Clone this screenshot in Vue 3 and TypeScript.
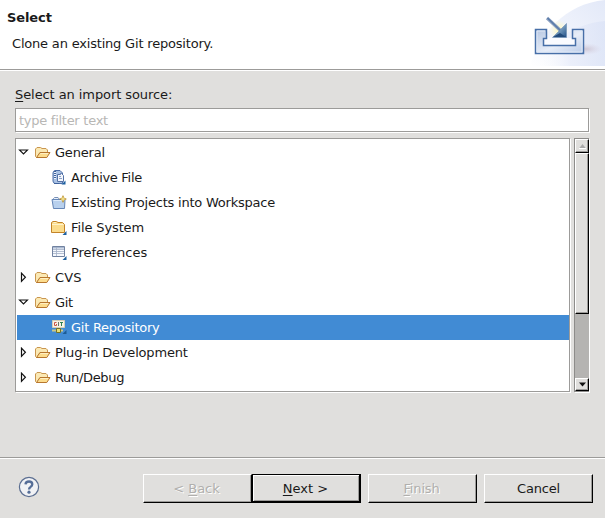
<script setup lang="ts">
import { ref } from 'vue'

type Icon = 'folder' | 'archive' | 'project' | 'files' | 'prefs' | 'git'
interface Row {
  label: string
  icon: Icon
  open?: boolean
  child?: boolean
  spacing: number
}

const rows: Row[] = [
  { label: 'General', icon: 'folder', open: true, spacing: -0.2 },
  { label: 'Archive File', icon: 'archive', child: true, spacing: -0.3 },
  { label: 'Existing Projects into Workspace', icon: 'project', child: true, spacing: -0.22 },
  { label: 'File System', icon: 'files', child: true, spacing: -0.12 },
  { label: 'Preferences', icon: 'prefs', child: true, spacing: -0.03 },
  { label: 'CVS', icon: 'folder', open: false, spacing: 0.2 },
  { label: 'Git', icon: 'folder', open: true, spacing: -0.3 },
  { label: 'Git Repository', icon: 'git', child: true, spacing: -0.25 },
  { label: 'Plug-in Development', icon: 'folder', open: false, spacing: -0.18 },
  { label: 'Run/Debug', icon: 'folder', open: false, spacing: -0.33 },
]
const selected = ref('Git Repository')
const filter = ref('')
</script>

<template>
  <div class="dialog">
    <header class="banner">
      <div class="heading">
        <h1>Select</h1>
        <p>Clone an existing Git repository.</p>
      </div>
      <svg class="art" width="105" height="66" viewBox="0 0 105 66">
        <defs>
          <linearGradient id="sky" x1="0" y1="1" x2="1" y2="0">
            <stop offset="0" stop-color="#fff" /><stop offset=".45" stop-color="#f1f4fc" /><stop offset="1" stop-color="#e3e9f8" />
          </linearGradient>
          <linearGradient id="sky2" x1="0" y1="0" x2="1" y2="0">
            <stop offset="0" stop-color="#fff" stop-opacity="0" /><stop offset=".5" stop-color="#e6ebf9" /><stop offset="1" stop-color="#dae2f6" />
          </linearGradient>
          <linearGradient id="tray" x1="0" y1="0" x2="1" y2="1">
            <stop offset="0" stop-color="#b5c6e2" /><stop offset=".55" stop-color="#e7edf8" /><stop offset="1" stop-color="#bacbe8" />
          </linearGradient>
          <radialGradient id="glow"><stop offset="0" stop-color="#fff9b8" /><stop offset="1" stop-color="#fffbd0" stop-opacity="0" /></radialGradient>
          <radialGradient id="shade"><stop offset="0" stop-color="#c4b8c6" stop-opacity=".7" /><stop offset="1" stop-color="#d8d0e0" stop-opacity="0" /></radialGradient>
          <linearGradient id="head" x1="0" y1="0" x2="1" y2="1">
            <stop offset="0" stop-color="#c2d5e8" /><stop offset=".6" stop-color="#638bb2" /><stop offset="1" stop-color="#204e86" />
          </linearGradient>
        </defs>
        <path d="M30 66C40 34 64 4 105 0V66Z" fill="url(#sky)" />
        <path d="M36 66C50 42 72 24 105 21V66Z" fill="url(#sky2)" opacity=".7" />
        <ellipse cx="86" cy="49" rx="16" ry="6" fill="url(#shade)" />
        <circle cx="59" cy="30" r="10" fill="url(#glow)" />
        <path d="M44.500 38h31v8h-31z" fill="#fafbff" />
        <path d="M35.500 29.500H46.500V38.500H43.500V45.500H75.500V38.500H72.500V29.500H83.500V53.500H35.500Z" fill="url(#tray)" stroke="#476fa8" stroke-width="1.500" />
        <path d="M37 31H45M37 31V52H82V31H74" fill="none" stroke="#dfe8f6" stroke-width="1" />
        <path d="M47 18L61 31" stroke="#8fa3c2" stroke-width="3.200" />
        <path d="M47.500 18L61 31" stroke="#597ba9" stroke-width="1.600" />
        <path d="M66.500 23.500V37.500H52.500Z" fill="url(#head)" stroke="#6b8db3" stroke-width=".6" />
        <path d="M53 37L60 33L66 37Z" fill="#234b7b" />
      </svg>
    </header>
    <div class="rule"></div>

    <main>
      <label class="caption" for="filter"><u>S</u>elect an import source:</label>
      <input id="filter" v-model="filter" class="filter" placeholder="type filter text" />
      <div class="viewer">
        <ul class="tree">
          <li
            v-for="row in rows"
            :key="row.label"
            :class="{ child: row.child, selected: selected === row.label }"
            @click="selected = row.label"
          >
            <svg v-if="!row.child" class="twisty" width="11" height="11" viewBox="0 0 11 11">
              <path v-if="row.open" d="M1.500 3H9.500L5.500 7Z" fill="#fff" stroke="#111" stroke-width="1.100" />
              <path v-else d="M3.500 1.200V9.300L7.400 5.250Z" fill="#fff" stroke="#111" stroke-width="1.200" />
            </svg>
            <svg class="icon" width="16" height="16" viewBox="0 0 16 16">
              <template v-if="row.icon === 'folder'">
                <path d="M1.500 12.500L.5 11.500V4L2 2.500H5.500L7 3.500H11L12.500 5V7.500H5L2 12.500Z" fill="#fbe9b4" stroke="#c9964f" />
                <path d="M1.500 12.500L5 7.500H15L11.800 12.500Z" fill="#fcdc8d" stroke="#b8772f" />
                <path d="M5.500 8.500H13" stroke="#fff0c4" />
              </template>
              <template v-else-if="row.icon === 'archive'">
                <path d="M4 .5H9L11.500 3V13.500H4Q2 13 2 11V3Q2 1 4 .5Z" fill="#a9c1e3" stroke="#4c6fa8" />
                <path d="M6.500 4.500H9.500V3.500H10.500L12.500 5.500V11.500H6.500Z" fill="#f4f7fd" stroke="#5673a6" />
                <path d="M4 1V9" stroke="#f1f5fc" stroke-width="2" />
                <path d="M4 1V9" stroke="#3f629c" stroke-width="2" stroke-dasharray="1 1" />
                <path d="M8 6.500H10M8 8.500H11" stroke="#8ea2c5" />
                <path d="M3 13.500H8" stroke="#3f629c" />
                <path d="M14.500 10.500V14.500H10.500Z" fill="#1c5f9f" />
              </template>
              <template v-else-if="row.icon === 'project'">
                <path d="M2.500 5V3.500L3.500 2.500H7L8.500 4.500" fill="#e7effa" stroke="#7990b6" />
                <path d="M1 4.500H14L13.500 13.500H2.500Z" fill="#b8d0ed" stroke="#6586b7" />
                <path d="M2.500 5.500H12" stroke="#dceafb" />
                <path d="M12 0L13.300 2.700L16 4L13.300 5.300L12 8L10.700 5.300L8 4L10.700 2.700Z" fill="#b98c22" />
                <path d="M12 2V6M10 4H14" stroke="#fff5ac" />
              </template>
              <template v-else-if="row.icon === 'files'">
                <path d="M.5 12.500V2.500L2 1.500H5.500L7 2.500H11.500L13.500 4.500V12.500Z" fill="#fbdc8d" stroke="#c38328" />
                <path d="M1 4.500H12.500M2.500 2.500H5" stroke="#fff3cc" />
                <path d="M15.500 11V15H11.500Z" fill="#1c5f9f" />
              </template>
              <template v-else-if="row.icon === 'prefs'">
                <path d="M1.500 1.500H13.500V11.500H1.500Z" fill="#f5f8fd" stroke="#7182a0" />
                <path d="M2 2H13V3.500H2Z" fill="#a9b8d0" />
                <path d="M2 4.500H13M5.500 2V11M2 6.500H13M2 8.500H13" stroke="#a3b0c6" stroke-width=".8" />
                <path d="M15.500 11V15H11.500Z" fill="#1c5f9f" />
              </template>
              <template v-else>
                <path d="M1.500 .5H13.500V7.500H1.500Z" fill="#f8f4e7" stroke="#d5d0b8" />
                <path d="M5.500 2.500H3.500V5.500H5.500V4" fill="none" stroke="#c85647" />
                <path d="M7.500 2V6" stroke="#6c7866" />
                <path d="M9 2.500H12M10.500 2.500V6" stroke="#328153" />
                <path d="M7.500 8V10" stroke="#6c7030" stroke-width="2" />
                <path d="M1 10.500H12" stroke="#cbc88a" stroke-width="2" />
                <path d="M5.500 8.500H9.500V12.500H5.500Z" fill="#e8df77" stroke="#757223" />
                <path d="M15.500 10V14H11.500Z" fill="#1d5c94" />
              </template>
            </svg>
            <span class="label" :style="{ letterSpacing: row.spacing + 'px' }">{{ row.label }}</span>
          </li>
        </ul>
        <div class="scrollbar">
          <div class="cap"><svg width="7" height="5"><path d="M0 4.500L3.500 0L7 4.500Z" fill="#aaa" /><path d="M0 4.500H7" stroke="#fff" /></svg></div>
          <div class="thumb"></div>
          <div class="cap down"><svg width="7" height="5"><path d="M0 .5H7L3.500 4.500Z" fill="#111" /></svg></div>
        </div>
      </div>
    </main>

    <div class="rule"></div>
    <footer>
      <svg class="help" width="22" height="22" viewBox="0 0 22 22">
        <circle cx="11" cy="11" r="9.600" fill="#f1f2f5" stroke="#5b6e91" stroke-width="1.200" />
        <path d="M7.500 8.400Q7.600 5.500 11 5.500Q14.300 5.500 14.300 8.300Q14.300 9.800 12.600 10.900Q11 11.800 11 13.500" fill="none" stroke="#566e98" stroke-width="2.300" />
        <circle cx="11" cy="16.200" r="1.600" fill="#566e98" />
      </svg>
      <div class="buttons">
        <button disabled>&lt; <u>B</u>ack</button>
        <button class="default"><u>N</u>ext &gt;</button>
        <button class="finish" disabled><u>F</u>inish</button>
        <button class="cancel">Cancel</button>
      </div>
    </footer>
  </div>
</template>

<style>
body { margin: 0; overflow: hidden; }
</style>

<style scoped>
.dialog {
  width: 605px; height: 518px; display: flex; flex-direction: column;
  background: #e0dfdd; color: #1a1a1a;
  font: 13px/16px "DejaVu Sans", sans-serif;
}
.banner { height: 69px; display: flex; justify-content: space-between; background: #fff; }
.heading { padding: 10px 0 0 7px; }
h1 { margin: 0; font-size: 13px; line-height: 16px; font-weight: bold; letter-spacing: -.1px; }
p { margin: 10px 0 0 5px; letter-spacing: -.19px; }
.art { display: block; }
.rule { height: 1px; flex: none; background: #9c9b99; border-bottom: 1px solid #fff; }
main { height: 370px; padding: 16px 15px 0; display: flex; flex-direction: column; }
u { text-underline-offset: 2px; text-decoration-thickness: 1px; }
.caption { height: 21px; letter-spacing: -.08px; }
.filter {
  box-sizing: border-box; width: 574px; height: 24px; padding: 0 3px; margin: 0 0 6px;
  border: 1px solid #9c9b99; border-radius: 0; box-shadow: 1px 1px #fff; outline: none;
  font: inherit; letter-spacing: -.27px; background: #fff;
}
.filter::placeholder { color: #b8b7b5; opacity: 1; }
.viewer { display: flex; gap: 4px; height: 254px; }
.tree {
  list-style: none; box-sizing: border-box; width: 555px; height: 254px; margin: 0; padding: 1px 0 1px 1px;
  border: 1px solid #9c9b99; box-shadow: 1px 1px #fff; background: #fff;
}
li { height: 25px; display: flex; align-items: center; padding-left: 1px; }
li.child { padding-left: 34px; }
li.selected { background: #418bd4; color: #fff; }
.twisty { margin-right: 6px; flex: none; }
.icon { margin-right: 4px; flex: none; }
.label { white-space: nowrap; }
.scrollbar {
  box-sizing: border-box; width: 15px; height: 254px; display: flex; flex-direction: column;
  border: solid #8d8c8a; border-width: 1px 0 1px 1px; background: #b5b4b2; box-shadow: 1px 1px #fff;
}
.cap, .thumb {
  box-sizing: border-box; border: 1px solid; border-color: #fff #000 #000 #fff;
  box-shadow: inset -1px -1px #9c9b99; background: #e0dfdd;
}
.cap { height: 14px; flex: none; display: flex; align-items: center; justify-content: center; }
.thumb { height: 161px; }
.down { margin-top: auto; height: 13px; }
footer { display: flex; align-items: flex-start; justify-content: space-between; padding: 15px 12px 0 18px; }
.help { margin-top: 2px; }
.buttons { display: flex; }
button {
  width: 109px; height: 29px; padding: 0 2px 0 0; border: 1px solid; border-color: #fff #000 #000 #fff;
  border-radius: 0; background: #e0dfdd; box-shadow: inset -1px -1px #9c9b99; font: inherit; color: #1a1a1a;
}
button:disabled { color: #b0afad; text-shadow: 1px 1px #fff; }
.default { border-color: #000; box-shadow: inset -1px -1px #000, inset 1px 1px #fff, inset -2px -2px #9c9b99; }
.finish, .cancel { margin-left: 7px; }
.finish { letter-spacing: -.15px; }
.cancel { letter-spacing: -.2px; padding: 0; }
</style>
